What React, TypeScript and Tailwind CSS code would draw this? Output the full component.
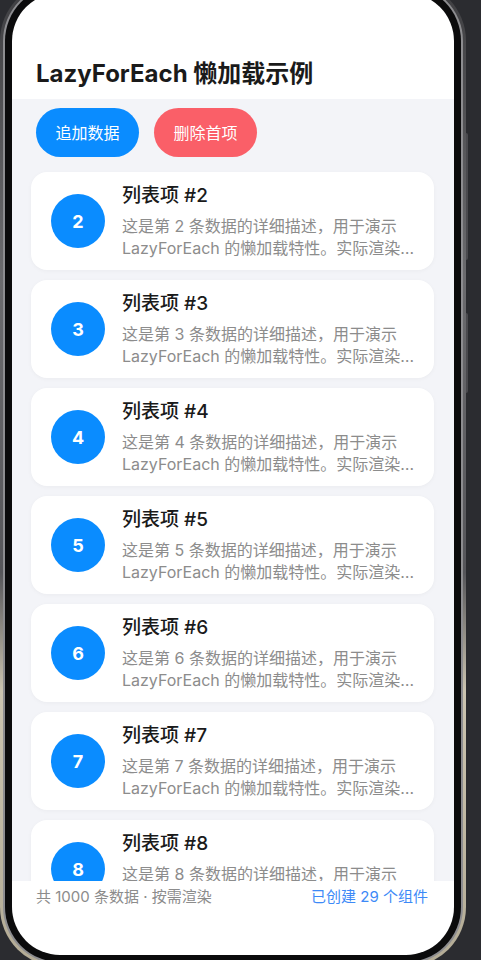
const items = [2, 3, 4, 5, 6, 7, 8];

function ListCard({ n }: { n: number }) {
  return (
    <div className="flex h-[98px] shrink-0 items-center rounded-[16px] bg-white pl-[20px] pr-[14px] shadow-[0_1px_4px_rgba(0,0,0,0.04)]">
      <div className="flex h-[54px] w-[54px] shrink-0 items-center justify-center rounded-full bg-[#0a8cff] text-[18px] font-bold text-white">
        {n}
      </div>
      <div className="ml-[17px] min-w-0 flex-1">
        <div className="text-[19px] font-medium leading-[26px] text-[#1a1a1a]">列表项 #{n}</div>
        <p className="mt-[6px] line-clamp-2 text-[16px] leading-[22px] text-[#8c8c8c]">
          这是第 {n} 条数据的详细描述，用于演示 LazyForEach 的懒加载特性。实际渲染时只会创建可视区域内的组件。
        </p>
      </div>
    </div>
  );
}

export default function App() {
  return (
    <div
      className="h-[960px] w-[481px] overflow-hidden bg-[#2b2c30]"
      style={{ fontFamily: 'Inter, "Noto Sans CJK SC", sans-serif' }}
    >
      <div className="relative mt-[-19px] h-[986px] w-[466px] rounded-[60px] bg-[linear-gradient(180deg,#3e3e41_0%,#6b6b6e_30%,#56565a_60%,#cbc4b0_72%,#b3ab95_100%)] p-[3px]">
        {/* side buttons */}
        <div className="absolute right-[-2px] top-[152px] h-[127px] w-[2px] rounded-r bg-[#4a4a4e]" />
        <div className="absolute right-[-2px] top-[332px] h-[80px] w-[2px] rounded-r bg-[#4a4a4e]" />
        <div className="h-full w-full rounded-[57px] bg-[#8d8d90] p-[2px]">
          <div className="h-full w-full rounded-[55px] bg-[#0b0b0c] p-[7px]">
            <div className="flex h-full w-full flex-col overflow-hidden rounded-[48px] bg-white">
              {/* header */}
              <div className="flex h-[106px] shrink-0 items-end px-[24px] pb-[9px]">
                <h1 className="text-[24px] font-bold leading-[32px] text-[#1a1a1a]">LazyForEach 懒加载示例</h1>
              </div>

              {/* content */}
              <div className="flex h-[782px] shrink-0 flex-col overflow-hidden bg-[#f3f4f8]">
                <div className="flex gap-[15px] px-[24px] pt-[9px]">
                  <button className="h-[49px] w-[103px] rounded-full bg-[#0a8cff] text-[16px] text-white">追加数据</button>
                  <button className="h-[49px] w-[103px] rounded-full bg-[#fa5f68] text-[16px] text-white">删除首项</button>
                </div>
                <div className="mt-[15px] flex flex-col gap-[10px] pl-[19px] pr-[20px]">
                  {items.map((n) => (
                    <ListCard key={n} n={n} />
                  ))}
                </div>
              </div>

              {/* footer */}
              <div className="flex flex-1 items-start justify-between pl-[24px] pr-[26px] pt-[6px] text-[15px] leading-[20px]">
                <span className="text-[#8c8c8c]">共 1000 条数据 · 按需渲染</span>
                <span className="text-[#3d8af7]">已创建 29 个组件</span>
              </div>
            </div>
          </div>
        </div>
      </div>
    </div>
  );
}
